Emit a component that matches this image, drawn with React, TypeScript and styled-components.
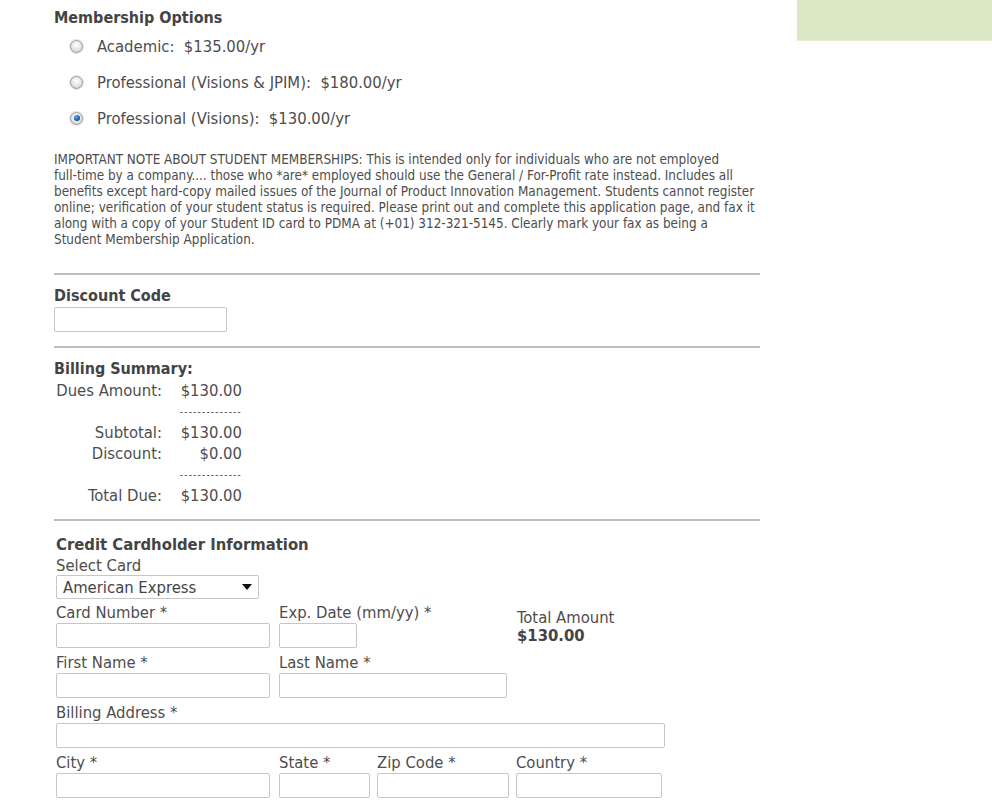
import React from 'react';
import styled, { createGlobalStyle } from 'styled-components';

const GlobalStyle = createGlobalStyle`
  body {
    margin: 0;
    background: #fff;
    font-family: 'DejaVu Sans Condensed', 'DejaVu Sans', sans-serif;
    font-stretch: condensed;
    color: #4d4d4d;
  }
`;

const OPTIONS = [
  { label: 'Academic:  $135.00/yr', checked: false },
  { label: 'Professional (Visions & JPIM):  $180.00/yr', checked: false },
  { label: 'Professional (Visions):  $130.00/yr', checked: true },
];

const NOTE_LINES = [
  'IMPORTANT NOTE ABOUT STUDENT MEMBERSHIPS: This is intended only for individuals who are not employed',
  'full-time by a company.... those who *are* employed should use the General / For-Profit rate instead. Includes all',
  'benefits except hard-copy mailed issues of the Journal of Product Innovation Management. Students cannot register',
  'online; verification of your student status is required. Please print out and complete this application page, and fax it',
  'along with a copy of your Student ID card to PDMA at (+01) 312-321-5145. Clearly mark your fax as being a',
  'Student Membership Application.',
];

const SUMMARY = [
  { label: 'Dues Amount:', value: '$130.00' },
  { label: '', value: '--------------', dashes: true },
  { label: 'Subtotal:', value: '$130.00' },
  { label: 'Discount:', value: '$0.00' },
  { label: '', value: '--------------', dashes: true },
  { label: 'Total Due:', value: '$130.00' },
];

function Field({ label, width, inputWidth }: { label: string; width?: number; inputWidth: number }) {
  return (
    <FieldBox $width={width}>
      <FieldLabel>{label}</FieldLabel>
      <TextInput $width={inputWidth} />
    </FieldBox>
  );
}

export default function App() {
  return (
    <>
      <GlobalStyle />
      <Page>
        <Main>
          <Heading>Membership Options</Heading>
          <RadioList>
            {OPTIONS.map((opt) => (
              <RadioRow key={opt.label}>
                <RadioMark $checked={opt.checked} />
                <span>{opt.label}</span>
              </RadioRow>
            ))}
          </RadioList>

          <Note>
            {NOTE_LINES.map((line) => (
              <NoteLine key={line}>{line}</NoteLine>
            ))}
          </Note>

          <Rule $space={25} />

          <Section $top={11}>
            <Heading>Discount Code</Heading>
            <TextInput $width={173} />
          </Section>

          <Rule $space={14} />

          <Section $top={11}>
            <Heading>Billing Summary:</Heading>
            <SummaryTable>
              {SUMMARY.map((row, i) => (
                <React.Fragment key={i}>
                  <SummaryLabel>{row.label}</SummaryLabel>
                  <SummaryValue $dashes={row.dashes}>{row.value}</SummaryValue>
                </React.Fragment>
              ))}
            </SummaryTable>
          </Section>

          <Rule $space={13} />

          <Section $top={14} $indent={2}>
            <Heading $size={16.5}>Credit Cardholder Information</Heading>
            <SelectLabel>Select Card</SelectLabel>
            <Select>
              <span>American Express</span>
              <Caret />
            </Select>

            <FieldRow>
              <Field label="Card Number *" width={223} inputWidth={214} />
              <Field label="Exp. Date (mm/yy) *" width={238} inputWidth={78} />
              <TotalBox>
                <span>Total Amount</span>
                <strong>$130.00</strong>
              </TotalBox>
            </FieldRow>
            <FieldRow>
              <Field label="First Name *" width={223} inputWidth={214} />
              <Field label="Last Name *" width={238} inputWidth={228} />
            </FieldRow>
            <FieldRow>
              <Field label="Billing Address *" inputWidth={609} />
            </FieldRow>
            <FieldRow>
              <Field label="City *" width={223} inputWidth={214} />
              <Field label="State *" width={98} inputWidth={91} />
              <Field label="Zip Code *" width={139} inputWidth={132} />
              <Field label="Country *" inputWidth={146} />
            </FieldRow>
          </Section>
        </Main>
        <Side>
          <GreenBox />
        </Side>
      </Page>
    </>
  );
}

const Page = styled.div`
  display: flex;
  align-items: flex-start;
  width: 992px;
`;

const Main = styled.div`
  width: 706px;
  margin-left: 54px;
  padding-top: 8px;
`;

const Side = styled.div`
  flex: 1;
  margin-left: 37px;
`;

const GreenBox = styled.div`
  height: 40px;
  background: #dce8c5;
  border-bottom: 1px solid #e4eed6;
`;

const Heading = styled.h2<{ $size?: number }>`
  margin: 0;
  font-size: ${({ $size }) => $size ?? 16}px;
  line-height: 20px;
  font-weight: bold;
  color: #444;
`;

const RadioList = styled.div`
  display: flex;
  flex-direction: column;
  gap: 16px;
  margin: 8px 0 0 16px;
`;

const RadioRow = styled.label`
  display: flex;
  align-items: center;
  gap: 14px;
  height: 20px;
  font-size: 16.5px;
  white-space: pre;
`;

const RadioMark = styled.span<{ $checked: boolean }>`
  position: relative;
  flex: none;
  width: 13px;
  height: 13px;
  border-radius: 50%;
  border: 1px solid #9a9a9a;
  background: radial-gradient(circle at 50% 35%, #ffffff 0%, #e2e2e2 60%, #c8c8c8 100%);
  box-shadow: 0 0 0 1px #e6e6e6;
  box-sizing: border-box;

  &::after {
    content: '';
    display: ${({ $checked }) => ($checked ? 'block' : 'none')};
    position: absolute;
    left: 2.5px;
    top: 2.5px;
    width: 6px;
    height: 6px;
    border-radius: 50%;
    background: radial-gradient(circle at 40% 35%, #6fb1e6 0%, #1d5f9c 55%, #0d2f55 100%);
  }
`;

const Note = styled.div`
  margin-top: 24px;
  font-size: 13.4px;
  line-height: 16px;
  color: #4d4d4d;
`;

const NoteLine = styled.div`
  white-space: nowrap;
`;

const Rule = styled.hr<{ $space: number }>`
  margin: ${({ $space }) => $space}px 0 0;
  border: 0;
  border-top: 2px solid #bcbcbc;
  height: 0;
`;

const Section = styled.div<{ $top: number; $indent?: number }>`
  padding-top: ${({ $top }) => $top}px;
  padding-left: ${({ $indent }) => $indent ?? 0}px;
  display: flex;
  flex-direction: column;
  align-items: flex-start;
`;

const TextInput = styled.div<{ $width: number }>`
  width: ${({ $width }) => $width}px;
  height: 25px;
  margin-top: 1px;
  box-sizing: border-box;
  border: 1px solid #c6c6c6;
  border-radius: 2px;
  background: #fff;
`;

const SummaryTable = styled.div`
  display: grid;
  grid-template-columns: 108px 80px;
  grid-auto-rows: 21px;
  align-items: center;
  margin-top: 1px;
  font-size: 16.5px;
`;

const SummaryLabel = styled.span`
  text-align: right;
`;

const SummaryValue = styled.span<{ $dashes?: boolean }>`
  text-align: right;
  font-size: ${({ $dashes }) => ($dashes ? '10px' : 'inherit')};
  letter-spacing: ${({ $dashes }) => ($dashes ? '1.2px' : 'normal')};
`;

const FieldLabel = styled.div`
  font-size: 16.5px;
  line-height: 18px;
  white-space: nowrap;
`;

const SelectLabel = styled(FieldLabel)`
  margin-top: 2px;
`;

const Select = styled.div`
  width: 203px;
  height: 24px;
  box-sizing: border-box;
  border: 1px solid #c6c6c6;
  border-radius: 2px;
  display: flex;
  align-items: center;
  justify-content: space-between;
  padding: 0 6px;
  font-size: 16.5px;
  color: #444;
`;

const Caret = styled.span`
  width: 0;
  height: 0;
  border-left: 5px solid transparent;
  border-right: 5px solid transparent;
  border-top: 6px solid #111;
`;

const FieldRow = styled.div`
  display: flex;
  align-items: flex-start;
  margin-top: 5px;

  & + & {
    margin-top: 6px;
  }
`;

const FieldBox = styled.div<{ $width?: number }>`
  width: ${({ $width }) => ($width ? `${$width}px` : 'auto')};
  display: flex;
  flex-direction: column;
`;

const TotalBox = styled.div`
  display: flex;
  flex-direction: column;
  padding-top: 5px;
  font-size: 16.5px;
  line-height: 18px;

  strong {
    color: #444;
  }
`;
